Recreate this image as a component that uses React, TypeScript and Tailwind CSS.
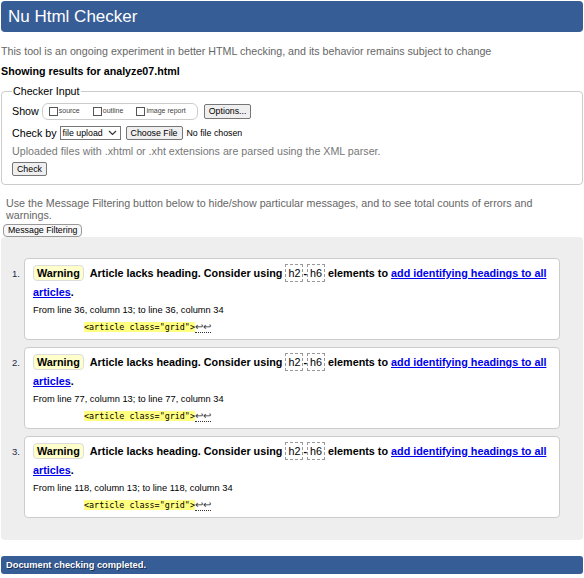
const messages = [
  { n: 1, line: 36 },
  { n: 2, line: 77 },
  { n: 3, line: 118 },
];

function Box({ children }: { children: React.ReactNode }) {
  return (
    <span className="inline-block border border-dashed border-[#999] px-[2px] font-normal leading-[16px]">
      {children}
    </span>
  );
}

function Btn({ children, className = "" }: { children: React.ReactNode; className?: string }) {
  return (
    <button
      type="button"
      className={`rounded-[2px] border border-[#767676] bg-[#efefef] px-[4px] text-[8.8px] leading-[10px] text-black ${className}`}
    >
      {children}
    </button>
  );
}

function Check({ label }: { label: string }) {
  return (
    <span className="flex items-center gap-[1px]">
      <span className="h-[9px] w-[9px] border border-[#555] bg-white" />
      <span className="text-[7px] text-[#444]">{label}</span>
    </span>
  );
}

export default function App() {
  return (
    <div className="min-h-[578px] bg-white p-px font-['Liberation_Sans',Arial,sans-serif] text-[10.7px] leading-[14px] text-black">
      <h1 className="h-[31px] rounded-[4px] bg-[#375d96] pl-[7px] text-[17px] leading-[31px] font-normal text-white">
        Nu Html Checker
      </h1>

      <p className="mt-[12px] text-[#666]">
        This tool is an ongoing experiment in better HTML checking, and its behavior remains subject to change
      </p>
      <p className="mt-[6px] font-bold">Showing results for analyze07.html</p>

      <fieldset className="mt-[6px] rounded-[4px] border border-[#ccc] px-[10px] pb-[8px]">
        <legend className="px-px">Checker Input</legend>
        <div className="mt-[4px] flex h-[18px] items-center">
          <span className="mr-[3px]">Show</span>
          <div className="flex h-[17px] w-[156px] items-center gap-[13px] rounded-[6px] border border-[#ccc] pl-[6px]">
            <Check label="source" />
            <Check label="outline" />
            <Check label="image report" />
          </div>
          <Btn className="ml-[6px] h-[15px]">Options...</Btn>
        </div>
        <div className="mt-[5px] flex h-[16px] items-center">
          <span className="mr-[3px]">Check by</span>
          <span className="flex h-[14px] w-[61px] items-center justify-between border border-[#767676] bg-white px-[2px] text-[8.8px]">
            file upload
            <svg width="9" height="6" viewBox="0 0 9 6" className="mr-[1px]">
              <path d="M1 1l3.5 3.5L8 1" fill="none" stroke="#333" strokeWidth="1.2" />
            </svg>
          </span>
          <Btn className="ml-[5px] h-[14px]">Choose File</Btn>
          <span className="ml-[4px] text-[8.8px]">No file chosen</span>
        </div>
        <p className="mt-[3px] text-[#777]">Uploaded files with .xhtml or .xht extensions are parsed using the XML parser.</p>
        <Btn className="mt-[4px] h-[14px] px-[4px]">Check</Btn>
      </fieldset>

      <p className="mt-[12px] px-[5px] leading-[12px] text-[#666]">
        Use the Message Filtering button below to hide/show particular messages, and to see total counts of errors and
        warnings.
      </p>
      <button
        type="button"
        className="mt-[3px] ml-[2px] block h-[13px] rounded-[4px] border border-[#999] bg-[#f7f7f7] px-[4px] text-[8.8px] leading-[11px]"
      >
        Message Filtering
      </button>

      <div className="flex flex-col gap-[7px] rounded-[4px] bg-[#eeeeee] pt-[21px] pr-[23px] pb-[22px]">
        {messages.map((m) => (
          <div key={m.n} className="flex">
            <span className="w-[23px] shrink-0 pt-[9px] pr-[4px] text-right text-[9.5px] text-[#1c2b4a]">
              {m.n}.
            </span>
            <div className="h-[82px] flex-1 rounded-[4px] border border-[#ccc] bg-white pt-[5px] pr-[8px] pl-[8px]">
              <p className="text-[10.8px] leading-[19px] font-bold">
                <span className="mr-[6px] inline-block rounded-[4px] border border-[#ddd] bg-[#ffffcc] px-[3px] leading-[14px]">
                  Warning
                </span>
                Article lacks heading. Consider using <Box>h2</Box>-<Box>h6</Box> elements to{" "}
                <a href="#" className="text-[#0000ee] underline">
                  add identifying headings to all articles
                </a>
                .
              </p>
              <p className="mt-[1px] text-[9.3px] leading-[14px]">
                From line {m.line}, column 13; to line {m.line}, column 34
              </p>
              <p className="mt-[2px] pl-[51px] leading-[14px]">
                <code className="bg-[#ffff80] font-['DejaVu_Sans_Mono',monospace] text-[8.4px]">
                  &lt;article class="grid"&gt;
                </code>
                <span className="border-b border-dotted border-[#333] text-[10px] text-[#333]">↩↩</span>
              </p>
            </div>
          </div>
        ))}
      </div>

      <div className="mt-[16px] h-[18px] rounded-[3px] bg-[#375d96] pl-[5px] text-[9.3px] leading-[18px] font-bold text-white [text-shadow:1px_1px_0_#1a2f50]">
        Document checking completed.
      </div>
    </div>
  );
}
